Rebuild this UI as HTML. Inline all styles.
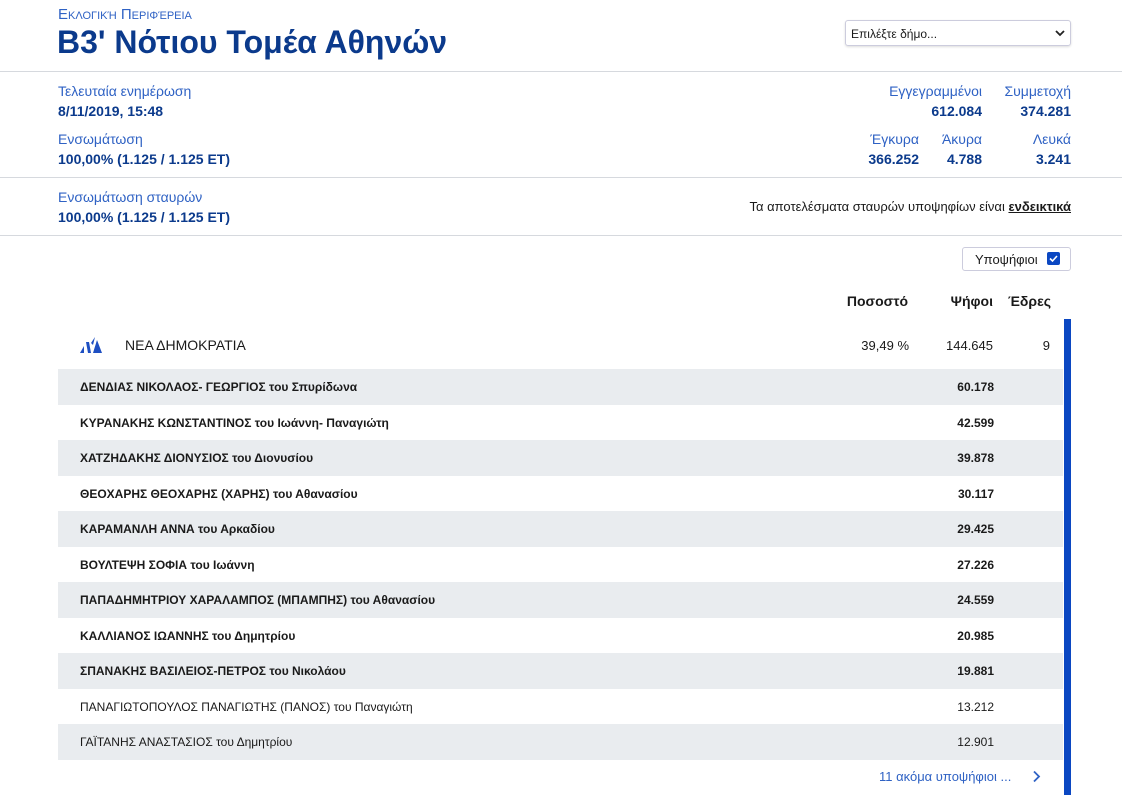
<!DOCTYPE html>
<html><head><meta charset="utf-8"><style>
body{margin:0;background:#fff;font-family:"Liberation Sans","DejaVu Sans",sans-serif;color:#1a1a1a;width:1122px;height:800px;overflow:hidden;position:relative}
.a{position:absolute;white-space:nowrap}
.lb{color:#2f62c4;font-size:14px}
.v{color:#0b3a8c;font-size:14px;font-weight:bold}
.hr{position:absolute;left:0;width:1122px;height:1px;background:#d6d9de}
.r{position:absolute;left:58px;width:1005px;height:35.5px;font-size:12px;font-weight:bold}
.r.g{background:#e9ecef}
.r span{position:absolute;top:11px}
.r .n{left:22px}
.r .c{right:69px}
.r.p{font-weight:normal}
</style></head><body>
<div class="a" style="left:58px;top:6px;color:#2f62c4;font-size:15px;font-variant:small-caps">Εκλογική Περιφέρεια</div>
<div class="a" style="left:57px;top:24px;color:#0b3a8c;font-size:32px;font-weight:bold">Β3' Νότιου Τομέα Αθηνών</div>
<div class="a" style="left:845px;top:20px;width:226px;height:26px;border:1px solid #ccd;border-radius:3px;box-sizing:border-box;font-size:12px;padding:6px 0 0 5px;box-shadow:0 1px 2px #ddd">Επιλέξτε δήμο...<svg style="position:absolute;right:5px;top:8px" width="10" height="8"><path d="M1 2l4 4 4-4" stroke="#222" stroke-width="1.8" fill="none"/></svg></div>
<div class="hr" style="top:71px"></div>
<div class="a lb" style="left:58px;top:83px">Τελευταία ενημέρωση</div>
<div class="a v" style="left:58px;top:103px">8/11/2019, 15:48</div>
<div class="a lb" style="left:58px;top:131px">Ενσωμάτωση</div>
<div class="a v" style="left:58px;top:151px">100,00% (1.125 / 1.125 ΕΤ)</div>
<div class="a lb" style="right:140px;top:83px">Εγγεγραμμένοι</div>
<div class="a v" style="right:140px;top:103px">612.084</div>
<div class="a lb" style="right:51px;top:83px">Συμμετοχή</div>
<div class="a v" style="right:51px;top:103px">374.281</div>
<div class="a lb" style="right:203px;top:131px">Έγκυρα</div>
<div class="a v" style="right:203px;top:151px">366.252</div>
<div class="a lb" style="right:140px;top:131px">Άκυρα</div>
<div class="a v" style="right:140px;top:151px">4.788</div>
<div class="a lb" style="right:51px;top:131px">Λευκά</div>
<div class="a v" style="right:51px;top:151px">3.241</div>
<div class="hr" style="top:177px"></div>
<div class="a lb" style="left:58px;top:189px">Ενσωμάτωση σταυρών</div>
<div class="a v" style="left:58px;top:209px">100,00% (1.125 / 1.125 ΕΤ)</div>
<div class="a" style="right:51px;top:199px;font-size:13px">Τα αποτελέσματα σταυρών υποψηφίων είναι <b style="text-decoration:underline">ενδεικτικά</b></div>
<div class="hr" style="top:235px"></div>
<div class="a" style="left:962px;top:247px;width:109px;height:24px;border:1px solid #ccd;border-radius:3px;box-sizing:border-box;font-size:13px;padding:4px 0 0 12px">Υποψήφιοι<span style="position:absolute;right:10px;top:4px;width:13px;height:13px;background:#0b47c2;border-radius:2px"><svg width="13" height="13" style="position:absolute;left:0;top:0"><path d="M3 6.5l2.5 2.5 4.5-5" stroke="#fff" stroke-width="1.6" fill="none"/></svg></span></div>
<div class="a" style="right:214px;top:293px;font-size:14px;font-weight:bold">Ποσοστό</div>
<div class="a" style="right:129px;top:293px;font-size:14px;font-weight:bold">Ψήφοι</div>
<div class="a" style="right:71px;top:293px;font-size:14px;font-weight:bold">Έδρες</div>
<div class="a" style="left:1064px;top:319px;width:7px;height:476px;background:#0b47c2"></div>
<svg class="a" style="left:80px;top:336px" width="23" height="18"><polygon points="0,17 4,10 4,17" fill="#1e4fc2"/><polygon points="6,6 9,6 11,17 8,17" fill="#1e4fc2"/><polygon points="11,7 15,1 13,9" fill="#1e4fc2"/><polygon points="17,4 22,17 13,17" fill="#1e4fc2"/></svg>
<div class="a" style="left:125px;top:337px;font-size:14px">ΝΕΑ ΔΗΜΟΚΡΑΤΙΑ</div>
<div class="a" style="right:213px;top:338px;font-size:13px">39,49 %</div>
<div class="a" style="right:129px;top:338px;font-size:13px">144.645</div>
<div class="a" style="right:72px;top:338px;font-size:13px">9</div>
<div class="r g" style="top:369px"><span class="n">ΔΕΝΔΙΑΣ ΝΙΚΟΛΑΟΣ- ΓΕΩΡΓΙΟΣ του Σπυρίδωνα</span><span class="c">60.178</span></div>
<div class="r" style="top:404.5px"><span class="n">ΚΥΡΑΝΑΚΗΣ ΚΩΝΣΤΑΝΤΙΝΟΣ του Ιωάννη- Παναγιώτη</span><span class="c">42.599</span></div>
<div class="r g" style="top:440px"><span class="n">ΧΑΤΖΗΔΑΚΗΣ ΔΙΟΝΥΣΙΟΣ του Διονυσίου</span><span class="c">39.878</span></div>
<div class="r" style="top:475.5px"><span class="n">ΘΕΟΧΑΡΗΣ ΘΕΟΧΑΡΗΣ (ΧΑΡΗΣ) του Αθανασίου</span><span class="c">30.117</span></div>
<div class="r g" style="top:511px"><span class="n">ΚΑΡΑΜΑΝΛΗ ΑΝΝΑ του Αρκαδίου</span><span class="c">29.425</span></div>
<div class="r" style="top:546.5px"><span class="n">ΒΟΥΛΤΕΨΗ ΣΟΦΙΑ του Ιωάννη</span><span class="c">27.226</span></div>
<div class="r g" style="top:582px"><span class="n">ΠΑΠΑΔΗΜΗΤΡΙΟΥ ΧΑΡΑΛΑΜΠΟΣ (ΜΠΑΜΠΗΣ) του Αθανασίου</span><span class="c">24.559</span></div>
<div class="r" style="top:617.5px"><span class="n">ΚΑΛΛΙΑΝΟΣ ΙΩΑΝΝΗΣ του Δημητρίου</span><span class="c">20.985</span></div>
<div class="r g" style="top:653px"><span class="n">ΣΠΑΝΑΚΗΣ ΒΑΣΙΛΕΙΟΣ-ΠΕΤΡΟΣ του Νικολάου</span><span class="c">19.881</span></div>
<div class="r p" style="top:688.5px"><span class="n">ΠΑΝΑΓΙΩΤΟΠΟΥΛΟΣ ΠΑΝΑΓΙΩΤΗΣ (ΠΑΝΟΣ) του Παναγιώτη</span><span class="c">13.212</span></div>
<div class="r g p" style="top:724px"><span class="n">ΓΑΪΤΑΝΗΣ ΑΝΑΣΤΑΣΙΟΣ του Δημητρίου</span><span class="c">12.901</span></div>
<div class="a" style="left:879px;top:769px;font-size:13px;color:#2f62c4">11 ακόμα υποψήφιοι ...</div>
<svg class="a" style="left:1032px;top:770px" width="10" height="13"><path d="M2 1.5l5 5-5 5" stroke="#2f62c4" stroke-width="1.8" fill="none"/></svg>
</body></html>
